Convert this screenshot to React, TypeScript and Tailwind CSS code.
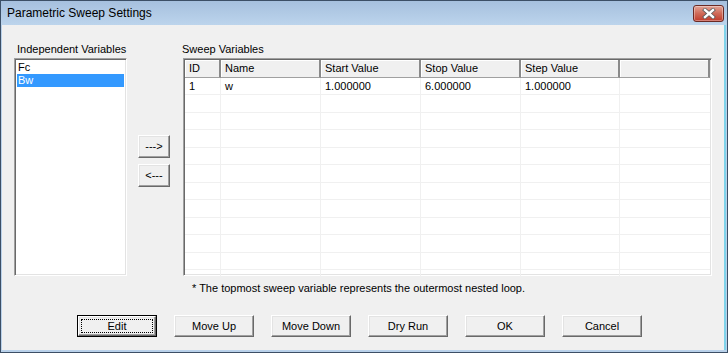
import React from 'react';

const raised =
  'border border-t-white border-l-white border-r-[#696969] border-b-[#696969] shadow-[inset_-1px_-1px_0_#a0a0a0,inset_1px_1px_0_#e3e3e3] bg-[#f0f0f0]';
const sunken =
  'border border-t-[#a0a0a0] border-l-[#a0a0a0] border-r-white border-b-white shadow-[inset_1px_1px_0_#696969,inset_-1px_-1px_0_#e3e3e3]';

const columns = [
  { label: 'ID', w: 'w-[36px]' },
  { label: 'Name', w: 'w-[100px]' },
  { label: 'Start Value', w: 'w-[100px]' },
  { label: 'Stop Value', w: 'w-[100px]' },
  { label: 'Step Value', w: 'w-[99px]' },
  { label: '', w: 'flex-1' },
];

const rows: string[][] = [['1', 'w', '1.000000', '6.000000', '1.000000', '']];
while (rows.length < 14) rows.push(['', '', '', '', '', '']);

function Button({ label, isDefault }: { label: string; isDefault?: boolean }) {
  if (isDefault) {
    return (
      <div className="w-[80px] h-[22px] border border-black">
        <div className={`${raised} h-full flex items-center justify-center p-[2px]`}>
          <div className="w-full h-full border border-dotted border-black flex items-center justify-center">
            {label}
          </div>
        </div>
      </div>
    );
  }
  return (
    <div className={`${raised} w-[80px] h-[22px] flex items-center justify-center`}>{label}</div>
  );
}

export default function App() {
  return (
    <div
      className="w-[728px] h-[353px] border border-[#3c4f66] bg-[#b9d1ea] flex flex-col text-[11px] text-black"
      style={{ fontFamily: '"Liberation Sans", Arial, sans-serif' }}
    >
      {/* Title bar */}
      <div className="h-[24px] bg-gradient-to-b from-[#a6c0de] to-[#bcd4ec] flex items-center justify-between pl-[6px] pr-[3px]">
        <span className="text-[12px] text-black">Parametric Sweep Settings</span>
        <div className="w-[31px] h-[17px] rounded-[3px] border border-[#6b2a24] bg-gradient-to-b from-[#e2a396] via-[#cf6a58] to-[#c0392a] flex items-center justify-center shadow-[inset_0_0_0_1px_rgba(255,255,255,0.35)]">
          <svg width="14" height="11" viewBox="0 0 14 11">
            <path d="M3 2 L11 9 M11 2 L3 9" stroke="#5a5a5a" strokeWidth="4" strokeLinecap="square" />
            <path d="M3 2 L11 9 M11 2 L3 9" stroke="#ffffff" strokeWidth="2.4" strokeLinecap="square" />
          </svg>
        </div>
      </div>

      {/* Body */}
      <div className="flex-1 mx-[1px] mb-[2px] bg-[#f0f0f0] border-r-[2px] border-r-[#7fd3ea] flex flex-col pt-[18px] pl-[12px]">
        <div className="flex">
          {/* Independent variables */}
          <div className="w-[113px] flex flex-col">
            <div className="h-[15px] pl-[3px] leading-[13px]">Independent Variables</div>
            <div className={`${sunken} h-[218px] bg-white p-[2px] leading-[13px]`}>
              <div className="h-[13px] pl-[1px]">Fc</div>
              <div className="h-[13px] pl-[1px] bg-[#3399ff] text-white">Bw</div>
            </div>
          </div>

          {/* Arrow buttons */}
          <div className="ml-[11px] pt-[92px] flex flex-col gap-[6px]">
            <div className={`${raised} w-[32px] h-[23px] flex items-center justify-center`}>---&gt;</div>
            <div className={`${raised} w-[32px] h-[23px] flex items-center justify-center`}>&lt;---</div>
          </div>

          {/* Sweep variables */}
          <div className="ml-[12px] flex flex-col">
            <div className="h-[15px] leading-[13px]">Sweep Variables</div>
            <div className={`${sunken} ml-[1px] w-[529px] h-[218px] bg-white p-[1px] flex flex-col`}>
              <div className="h-[18px] flex">
                {columns.map((c, i) => (
                  <div
                    key={i}
                    className={`${c.w} h-full bg-[#f0f0f0] border-r-[2px] border-r-[#8a8a8a] border-b border-b-[#a0a0a0] shadow-[inset_1px_1px_0_#ffffff] flex items-center pl-[4px]`}
                  >
                    {c.label}
                  </div>
                ))}
              </div>
              <div className="flex-1 grid grid-rows-[repeat(14,1fr)]">
                {rows.map((r, ri) => (
                  <div key={ri} className="flex border-b border-b-[#f0f0f0]">
                    {columns.map((c, ci) => (
                      <div
                        key={ci}
                        className={`${c.w} border-r border-r-[#f0f0f0] flex items-center pl-[4px] ${ci === 5 ? 'border-r-0' : ''}`}
                      >
                        {r[ci]}
                      </div>
                    ))}
                  </div>
                ))}
              </div>
            </div>
          </div>
        </div>

        {/* Note */}
        <div className="mt-[6px] pl-[178px] leading-[13px]">
          * The topmost sweep variable represents the outermost nested loop.
        </div>

        {/* Buttons */}
        <div className="mt-[20px] pl-[63px] flex gap-[17px]">
          <Button label="Edit" isDefault />
          <Button label="Move Up" />
          <Button label="Move Down" />
          <Button label="Dry Run" />
          <Button label="OK" />
          <Button label="Cancel" />
        </div>
      </div>
    </div>
  );
}
